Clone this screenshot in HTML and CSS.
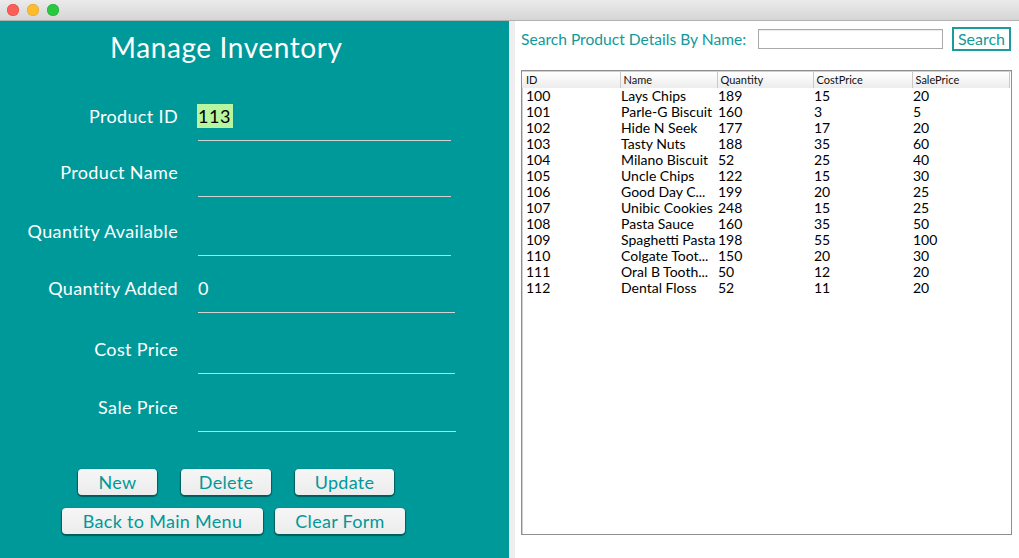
FILE: index.html
```html
<!DOCTYPE html>
<html>
<head>
<meta charset="utf-8">
<link rel="stylesheet" href="styles.css">
</head>
<body>
<div class="window">
  <div class="titlebar">
    <span class="light red"></span>
    <span class="light yellow"></span>
    <span class="light green"></span>
  </div>
  <div class="content">
    <div class="left">
      <h1 class="title">Manage Inventory</h1>
      <div class="form">
        <div class="row r1"><span class="label">Product ID</span><div class="field"><span class="idval">113</span></div></div>
        <div class="row r2"><span class="label">Product Name</span><div class="field"></div></div>
        <div class="row r3"><span class="label">Quantity Available</span><div class="field"></div></div>
        <div class="row r4"><span class="label">Quantity Added</span><div class="field wide"><span class="val">0</span></div></div>
        <div class="row r5"><span class="label">Cost Price</span><div class="field wide"></div></div>
        <div class="row r6"><span class="label">Sale Price</span><div class="field wider"></div></div>
      </div>
      <div class="buttons">
        <div class="btnrow first">
          <button class="btn b-new">New</button>
          <button class="btn b-del">Delete</button>
          <button class="btn b-upd">Update</button>
        </div>
        <div class="btnrow second">
          <button class="btn b-back">Back to Main Menu</button>
          <button class="btn b-clear">Clear Form</button>
        </div>
      </div>
    </div>
    <div class="divider"></div>
    <div class="right">
      <div class="search">
        <span class="slabel">Search Product Details By Name:</span>
        <div class="sinput"></div>
        <button class="sbtn">Search</button>
      </div>
      <div class="tablebox">
        <table class="grid">
          <colgroup>
            <col class="c1"><col class="c2"><col class="c3"><col class="c4"><col class="c5">
          </colgroup>
          <thead>
            <tr><th>ID</th><th>Name</th><th>Quantity</th><th>CostPrice</th><th>SalePrice</th></tr>
          </thead>
          <tbody>
            <tr><td>100</td><td>Lays Chips</td><td>189</td><td>15</td><td>20</td></tr>
            <tr><td>101</td><td>Parle-G Biscuit</td><td>160</td><td>3</td><td>5</td></tr>
            <tr><td>102</td><td>Hide N Seek</td><td>177</td><td>17</td><td>20</td></tr>
            <tr><td>103</td><td>Tasty Nuts</td><td>188</td><td>35</td><td>60</td></tr>
            <tr><td>104</td><td>Milano Biscuit</td><td>52</td><td>25</td><td>40</td></tr>
            <tr><td>105</td><td>Uncle Chips</td><td>122</td><td>15</td><td>30</td></tr>
            <tr><td>106</td><td>Good Day C...</td><td>199</td><td>20</td><td>25</td></tr>
            <tr><td>107</td><td>Unibic Cookies</td><td>248</td><td>15</td><td>25</td></tr>
            <tr><td>108</td><td>Pasta Sauce</td><td>160</td><td>35</td><td>50</td></tr>
            <tr><td>109</td><td>Spaghetti Pasta</td><td>198</td><td>55</td><td>100</td></tr>
            <tr><td>110</td><td>Colgate Toot...</td><td>150</td><td>20</td><td>30</td></tr>
            <tr><td>111</td><td>Oral B Tooth...</td><td>50</td><td>12</td><td>20</td></tr>
            <tr><td>112</td><td>Dental Floss</td><td>52</td><td>11</td><td>20</td></tr>
          </tbody>
        </table>
      </div>
    </div>
  </div>
</div>
</body>
</html>
```

FILE: styles.css
```css
* { box-sizing: border-box; }
html, body { margin: 0; padding: 0; }
body {
  width: 1019px;
  height: 558px;
  overflow: hidden;
  font-family: Lato, "Noto Sans", sans-serif;
  background: #fff;
}
.window { width: 1019px; height: 558px; display: flex; flex-direction: column; }
.titlebar {
  height: 21px;
  flex: none;
  background: linear-gradient(#ebebeb, #d5d5d5);
  border-bottom: 1px solid #b1b1b1;
  display: flex;
  align-items: center;
  padding-left: 7px;
  gap: 8px;
}
.light { width: 12px; height: 12px; border-radius: 50%; display: block; margin-top: -1px; }
.red { background: #fc5f57; box-shadow: inset 0 0 0 0.5px #df4744; }
.yellow { background: #fdbc2e; box-shadow: inset 0 0 0 0.5px #de9f34; }
.green { background: #28c940; box-shadow: inset 0 0 0 0.5px #27aa35; }

.content { flex: 1; display: flex; }
.left {
  width: 509px;
  flex: none;
  background: #009999;
  color: #fff;
}
.divider { width: 6px; flex: none; background: #eeeeee; }
.title {
  margin: 0;
  padding-top: 8px;
  height: 45px;
  line-height: 36px;
  font-size: 28px;
  font-weight: 400;
  text-align: left;
  padding-left: 110px;
  letter-spacing: 0.6px;
}
.form { padding-top: 38px; }
.row { display: flex; align-items: flex-start; }
.r2 { margin-top: 19px; }
.r3 { margin-top: 22px; }
.r4 { margin-top: 20px; }
.r5 { margin-top: 24px; }
.r6 { margin-top: 21px; }
.label {
  width: 178px;
  text-align: right;
  font-size: 18px;
  line-height: 24px;
  white-space: nowrap;
  letter-spacing: 0.35px;
}
.field {
  margin-left: 20px;
  width: 253px;
  height: 37px;
  border-bottom: 1px solid #d3d3d3;
  font-size: 18px;
  line-height: 24px;
}
.field.wide { width: 257px; }
.field.wider { width: 258px; }
.idval {
  display: inline-block;
  background: #b8f5a0;
  color: #000;
  padding: 0 2px 0 1px;
  margin-left: -1px;
  height: 24px;
  letter-spacing: 0.5px;
}
.val { color: #fff; }

.buttons { padding-top: 37px; }
.btnrow { display: flex; }
.btnrow.first { padding-left: 78px; gap: 24px; }
.btnrow.second { padding-left: 62px; gap: 12px; margin-top: 13px; }
.btn {
  height: 26px;
  background: linear-gradient(#f6f6f6, #ececec);
  border: none;
  border-radius: 4px;
  box-shadow: 0 1px 1px 1px rgba(0, 60, 60, 0.65);
  color: #009999;
  font-family: Lato, "Noto Sans", sans-serif;
  font-size: 18px;
  line-height: 26px;
  padding: 0;
  text-align: center;
  letter-spacing: 0.3px;
}
.b-new { width: 79px; }
.b-del { width: 90px; }
.b-upd { width: 99px; }
.b-back { width: 201px; }
.b-clear { width: 130px; }

.right { flex: 1; background: #fff; padding: 5px 8px 0 6px; }
.search { display: flex; align-items: center; height: 26px; }
.slabel { color: #109a9a; font-size: 15.6px; width: 237px; flex: none; white-space: nowrap; }
.sinput {
  flex: none;
  width: 185px;
  height: 20px;
  border: 1px solid #a9a9a9;
  box-shadow: inset 0 1px 1px rgba(0,0,0,0.08);
  background: #fff;
}
.sbtn {
  flex: none;
  margin-left: 9px;
  width: 59px;
  height: 24px;
  border: 2px solid #1a9c9c;
  background: #fff;
  color: #109a9a;
  font-family: Lato, "Noto Sans", sans-serif;
  font-size: 16px;
  padding: 0;
  line-height: 20px;
}
.tablebox {
  margin-top: 18px;
  width: 491px;
  height: 465px;
  border: 1px solid #8f8f8f;
  box-shadow: inset 1px 1px 0 #cfcfcf;
  padding: 1px 2px 0 0;
}
.grid { border-collapse: collapse; table-layout: fixed; width: 487px; }
.c1 { width: 98px; }
.c2 { width: 97px; }
.c3 { width: 96px; }
.c4 { width: 99px; }
.c5 { width: 97px; }
.grid th {
  height: 16px;
  font-size: 11px;
  font-weight: 400;
  text-align: left;
  padding: 0 0 0 4px;
  background: linear-gradient(#ffffff, #ececec);
  border-right: 1px solid #c9c9c9;
  line-height: 16px;
  color: #111;
}
.grid td {
  height: 16px;
  font-size: 14px;
  line-height: 16px;
  padding: 0 0 0 4px;
  white-space: nowrap;
  overflow: hidden;
  color: #000;
}
.grid td + td { padding-left: 1px; }
.grid th + th { padding-left: 3px; }
```
